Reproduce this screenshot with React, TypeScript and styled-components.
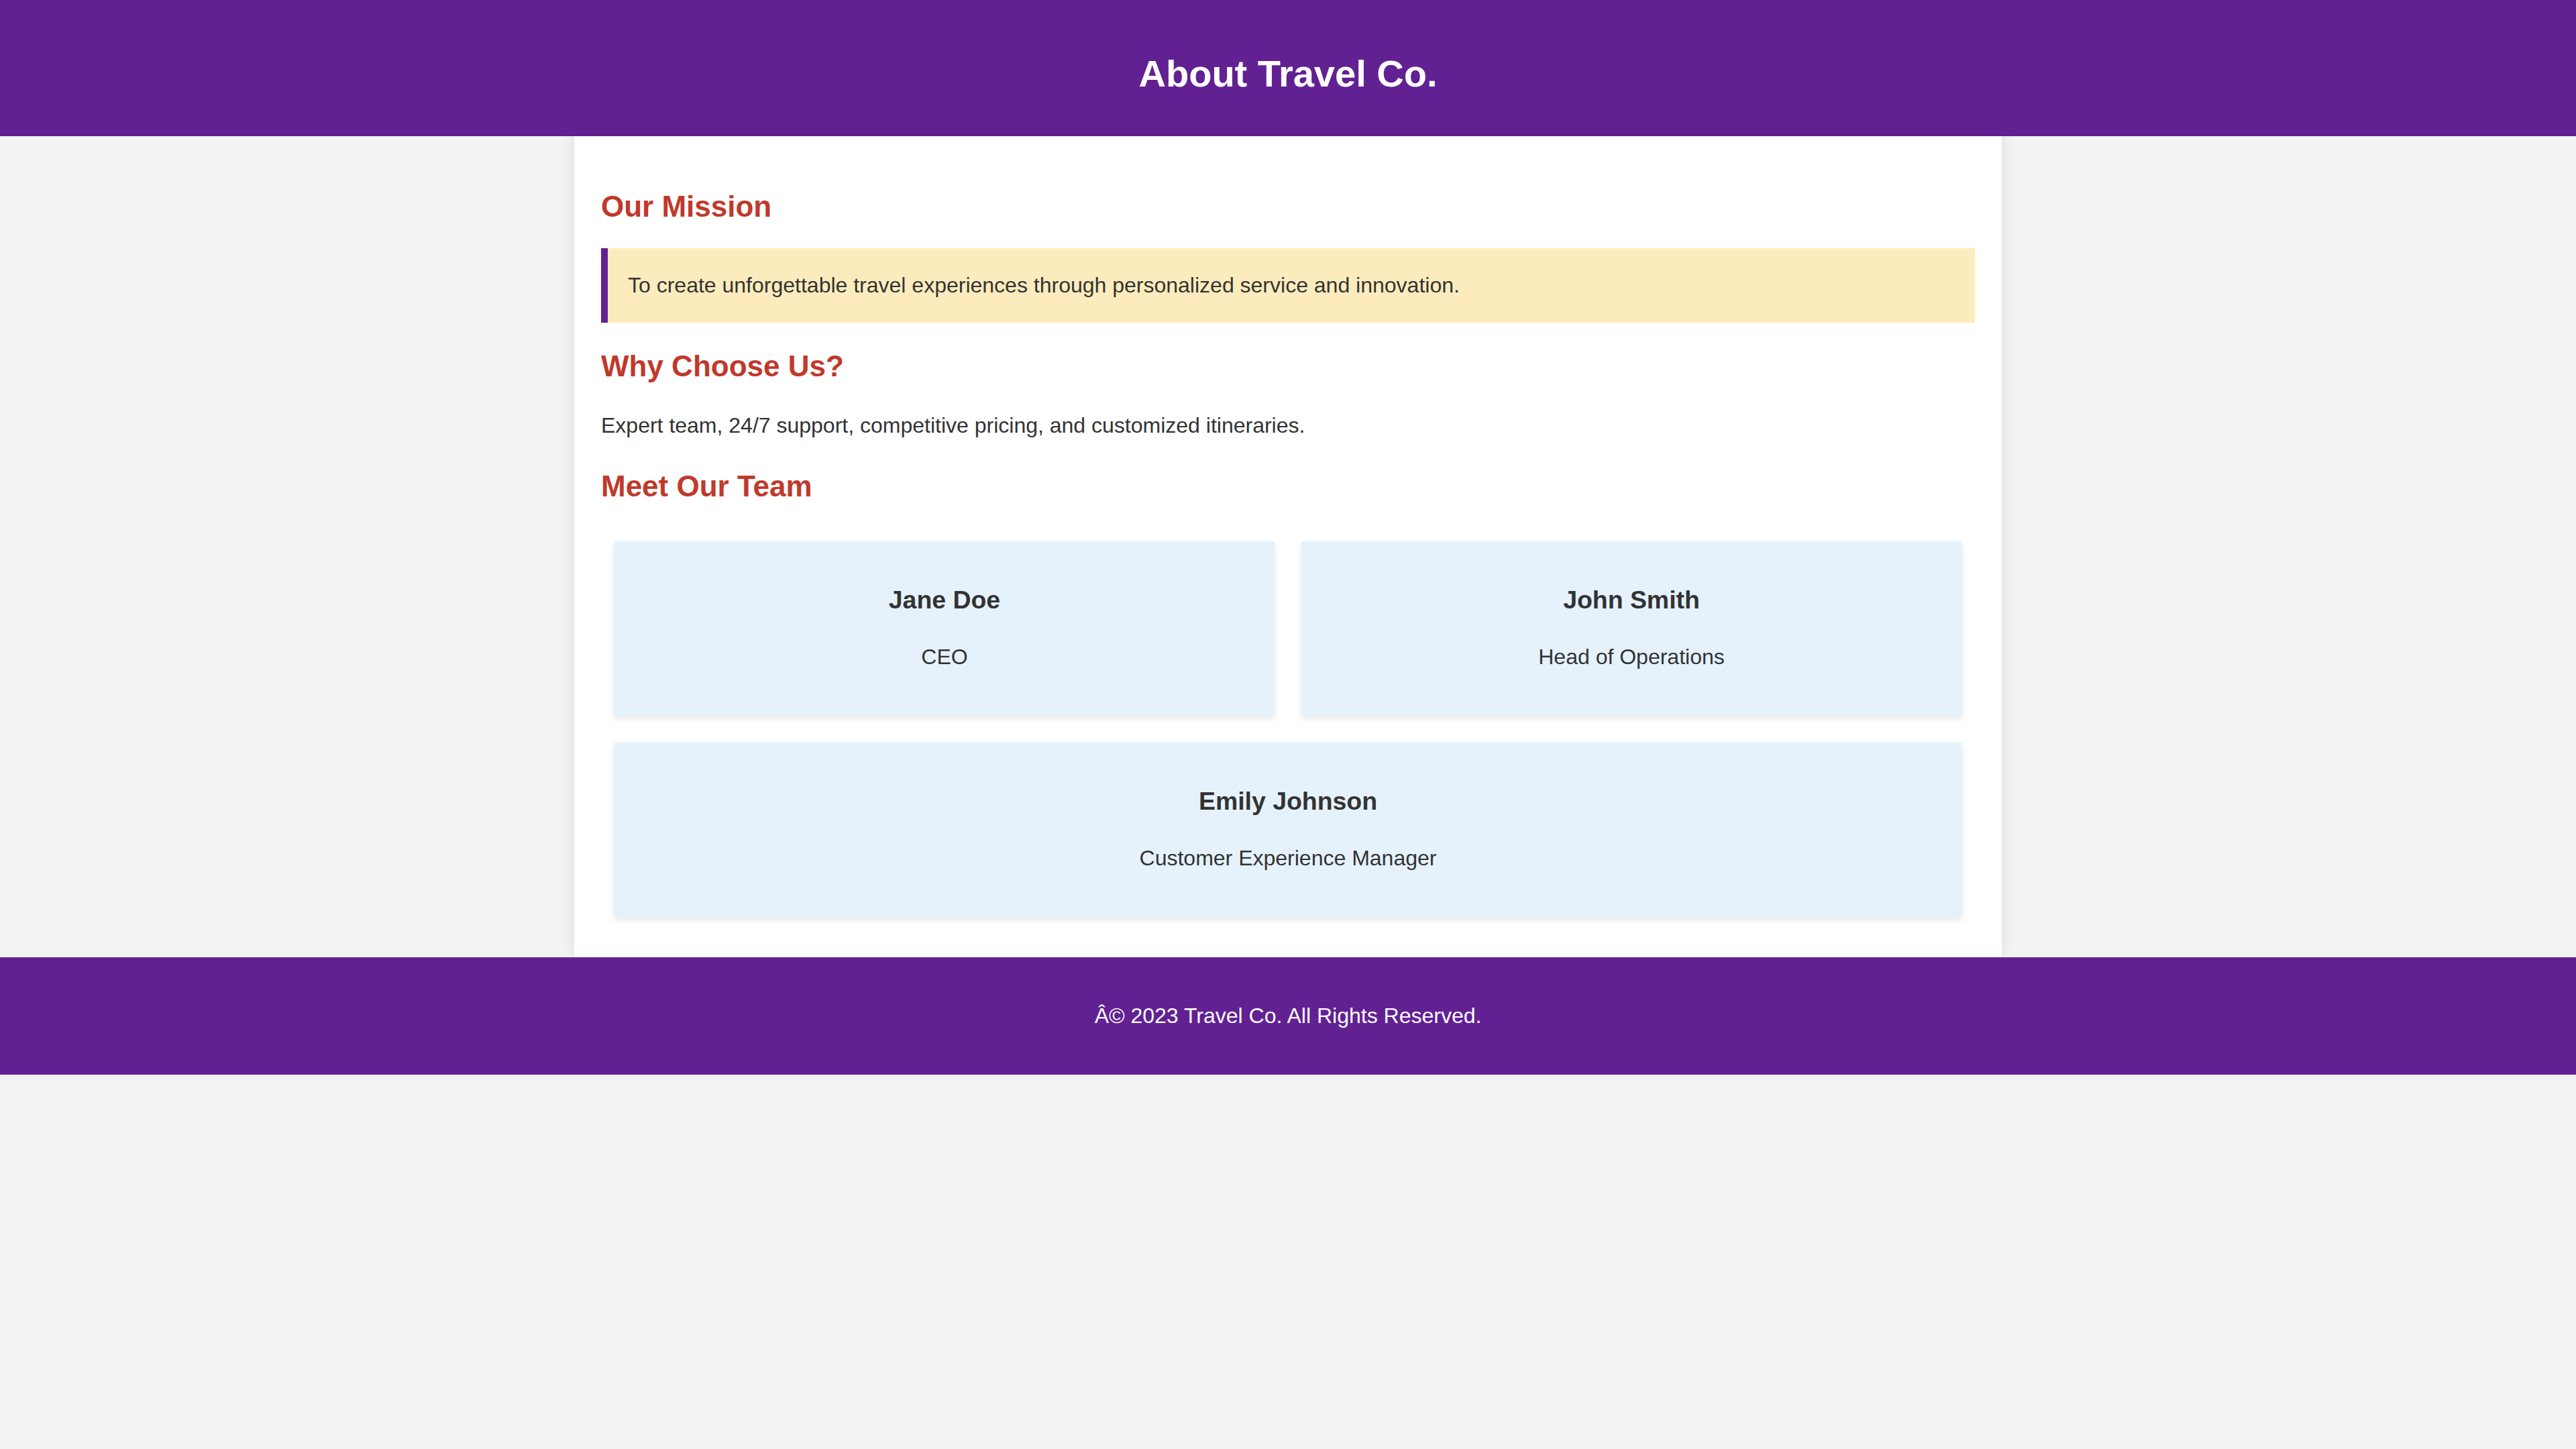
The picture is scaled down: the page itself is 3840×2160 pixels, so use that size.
import React from 'react'
import styled, { createGlobalStyle } from 'styled-components'

const GlobalStyle = createGlobalStyle`
    html, body {
        margin: 0;
        padding: 0;
        background: #f3f3f3;
    }

    body {
        font-family: "Liberation Sans", Arial, Helvetica, sans-serif;
        font-size: 32px;
        line-height: 1.6;
        color: #333;
    }
`

const Header = styled.header`
    background: #622192;
    color: #fff;
    text-align: center;
    padding: 65px 0 48px;
`

const Title = styled.h1`
    margin: 0;
    font-size: 56px;
    font-weight: bold;
`

const Container = styled.main`
    width: 2128px;
    box-sizing: border-box;
    margin: 0 auto;
    padding: 40px;
    background: #fff;
    box-shadow: 0 0 20px rgba(0, 0, 0, 0.1);
`

const SectionTitle = styled.h2`
    margin: 30px 0 27px;
    font-size: 44px;
    font-weight: bold;
    color: #c0392b;
`

const Mission = styled.div`
    background: #fcecbd;
    border-left: 10px solid #622192;
    padding: 30px;
    margin-top: 1px;
`

const Text = styled.p`
    margin: 0;
`

const TeamGrid = styled.div`
    display: flex;
    flex-wrap: wrap;
`

const Card = styled.div`
    flex: 1 1 900px;
    margin: 20px;
    padding: 58px 20px 62px;
    background: #e5f2fb;
    text-align: center;
    box-shadow: 0 4px 10px rgba(0, 0, 0, 0.1);
`

const Name = styled.h3`
    margin: 0 0 29px;
    font-size: 37.44px;
    font-weight: bold;
`

const Footer = styled.footer`
    background: #622192;
    color: #fff;
    text-align: center;
    padding: 62px 0;
`

const team = [
    { name: 'Jane Doe', role: 'CEO' },
    { name: 'John Smith', role: 'Head of Operations' },
    { name: 'Emily Johnson', role: 'Customer Experience Manager' },
]

const App: React.FC = () => {
    return (
        <>
            <GlobalStyle />
            <Header>
                <Title>About Travel Co.</Title>
            </Header>

            <Container>
                <SectionTitle>Our Mission</SectionTitle>
                <Mission>
                    To create unforgettable travel experiences through personalized service and innovation.
                </Mission>

                <SectionTitle>Why Choose Us?</SectionTitle>
                <Text>Expert team, 24/7 support, competitive pricing, and customized itineraries.</Text>

                <SectionTitle>Meet Our Team</SectionTitle>
                <TeamGrid>
                    {team.map((member) => (
                        <Card key={member.name}>
                            <Name>{member.name}</Name>
                            <Text>{member.role}</Text>
                        </Card>
                    ))}
                </TeamGrid>
            </Container>

            <Footer>
                <Text>Â© 2023 Travel Co. All Rights Reserved.</Text>
            </Footer>
        </>
    )
}

export default App
